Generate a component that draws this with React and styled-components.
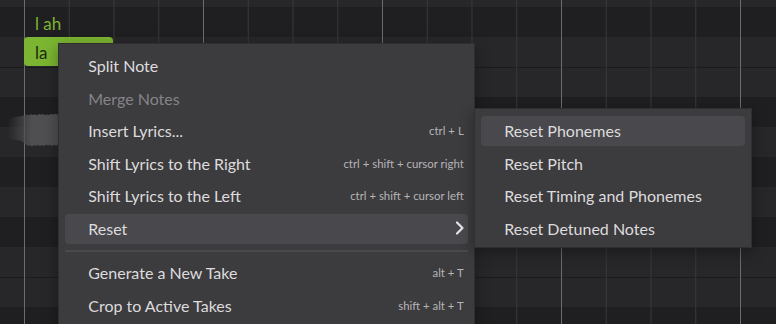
import React from 'react';
import styled, { createGlobalStyle } from 'styled-components';

const GlobalStyle = createGlobalStyle`
  html, body {
    margin: 0;
    padding: 0;
    background: #1f1f21;
  }
  body {
    font-family: Lato, "Noto Sans", sans-serif;
  }
`;

const Canvas = styled.div`
  position: relative;
  width: 776px;
  height: 324px;
  overflow: hidden;
  background: #1f1f21;
`;

const Rows = styled.div`
  display: flex;
  flex-direction: column;
`;

const KeyRow = styled.div`
  flex: none;
  height: ${p => p.$h}px;
  background: ${p => (p.$black ? '#1f1f21' : '#272729')};
  border-top: ${p => (p.$split ? '1px solid #1b1b1d' : 'none')};
  box-sizing: border-box;
`;

const GridLines = styled.div`
  position: absolute;
  inset: 0;
  pointer-events: none;
  background-image:
    linear-gradient(to right, #6c6c6f 0 1px, transparent 1px),
    linear-gradient(to right, #38383b 0 1px, transparent 1px);
  background-size: 179px 100%, 44.75px 100%;
  background-position: 24px 0, 24px 0;
  background-repeat: repeat-x;
`;

const PhonemeLabel = styled.div`
  position: absolute;
  left: 35px;
  top: 13px;
  font-size: 17px;
  line-height: 22px;
  color: #7db432;
`;

const Note = styled.div`
  position: absolute;
  left: 24px;
  top: 37px;
  width: 89px;
  height: 29px;
  box-sizing: border-box;
  padding: 2px 0 0 11px;
  display: flex;
  align-items: center;
  background: #7bb531;
  border-radius: 4px;
  font-size: 17px;
  color: #1d2810;
`;

const WaveSvg = styled.svg`
  position: absolute;
  left: 0;
  top: 110px;
`;

const Menu = styled.div`
  position: absolute;
  left: ${p => p.$x}px;
  top: ${p => p.$y}px;
  width: ${p => p.$w}px;
  box-sizing: border-box;
  padding: 5.75px 6.25px ${p => p.$pb}px;
  background: #3c3b3e;
  border: 1px solid #2f2e31;
  box-shadow: 0 4px 14px rgba(0, 0, 0, 0.35);
  display: flex;
  flex-direction: column;
`;

const Item = styled.div`
  height: 30px;
  margin: 1.25px 0;
  box-sizing: border-box;
  padding: 0 3px 1px 23px;
  display: flex;
  align-items: center;
  justify-content: space-between;
  border-radius: 4px;
  background: ${p => (p.$active ? '#49484c' : 'transparent')};
  color: ${p => (p.$disabled ? '#858488' : '#dcdbdd')};
  font-size: 16px;
  white-space: nowrap;
`;

const Shortcut = styled.span`
  font-size: 11.4px;
  color: #b6b5b8;
  padding-right: 1px;
`;

const Separator = styled.div`
  height: 2px;
  margin: 5px 0 5.25px;
  background: #4a494d;
`;

const Chevron = () => (
  <svg width="10" height="14" viewBox="0 0 10 14">
    <polyline
      points="2,1.5 7.5,7 2,12.5"
      fill="none"
      stroke="#e4e3e6"
      strokeWidth="2.2"
      strokeLinecap="round"
      strokeLinejoin="round"
    />
  </svg>
);

const Waveform = () => (
  <WaveSvg width="60" height="40" viewBox="0 0 60 40">
    <defs>
      <linearGradient id="fade" x1="0" x2="1" y1="0" y2="0">
        <stop offset="0" stopColor="#4e4e50" stopOpacity="0" />
        <stop offset="0.35" stopColor="#4e4e50" stopOpacity="0.8" />
        <stop offset="0.45" stopColor="#4f4f51" stopOpacity="1" />
        <stop offset="1" stopColor="#4f4f51" stopOpacity="1" />
      </linearGradient>
    </defs>
    <path
      fill="url(#fade)"
      d="M8 9 L16 7 L22 6 L25 5 L27 4.5 L29 5.2 L31 4.3 L33 5 L35 4.2 L37 5.4 L39 4 L41 4.8 L43 3.9 L45 5 L47 4.4 L49 5.1 L51 4 L53 4.6 L55 3.8 L57 4.5 L60 4 L60 35 L58 34.5 L56 35.8 L54 34.6 L52 36 L50 34.8 L48 35.6 L46 34.5 L44 36.3 L42 35 L40 36 L38 34.7 L36 35.9 L34 34.9 L32 36.4 L30 35.1 L28 36 L26 34.5 L24 33 L22 31 L16 30 L8 29 Z"
    />
  </WaveSvg>
);

const rows = [
  { h: 7 },
  { h: 30, black: true },
  { h: 30 },
  { h: 30, split: true },
  { h: 30, black: true },
  { h: 30 },
  { h: 30, black: true },
  { h: 30 },
  { h: 30, black: true },
  { h: 30 },
  { h: 30, split: true },
  { h: 30, black: true },
];

const mainItems = [
  { label: 'Split Note' },
  { label: 'Merge Notes', disabled: true },
  { label: 'Insert Lyrics...', shortcut: 'ctrl + L' },
  { label: 'Shift Lyrics to the Right', shortcut: 'ctrl + shift + cursor right' },
  { label: 'Shift Lyrics to the Left', shortcut: 'ctrl + shift + cursor left' },
  { label: 'Reset', submenu: true, active: true },
  { separator: true },
  { label: 'Generate a New Take', shortcut: 'alt + T' },
  { label: 'Crop to Active Takes', shortcut: 'shift + alt + T' },
];

const resetItems = [
  { label: 'Reset Phonemes', active: true },
  { label: 'Reset Pitch' },
  { label: 'Reset Timing and Phonemes' },
  { label: 'Reset Detuned Notes' },
];

const MenuItems = ({ items }) =>
  items.map((it, i) =>
    it.separator ? (
      <Separator key={i} />
    ) : (
      <Item key={i} $active={it.active} $disabled={it.disabled}>
        <span>{it.label}</span>
        {it.shortcut && <Shortcut>{it.shortcut}</Shortcut>}
        {it.submenu && <Chevron />}
      </Item>
    )
  );

export default function App() {
  return (
    <>
      <GlobalStyle />
      <Canvas>
        <Rows>
          {rows.map((r, i) => (
            <KeyRow key={i} $h={r.h} $black={r.black} $split={r.split} />
          ))}
        </Rows>
        <GridLines />
        <PhonemeLabel>l ah</PhonemeLabel>
        <Note>la</Note>
        <Waveform />
        <Menu $x={58} $y={43} $w={417} $pb={12}>
          <MenuItems items={mainItems} />
        </Menu>
        <Menu $x={474} $y={108} $w={278} $pb={2.5}>
          <MenuItems items={resetItems} />
        </Menu>
      </Canvas>
    </>
  );
}
